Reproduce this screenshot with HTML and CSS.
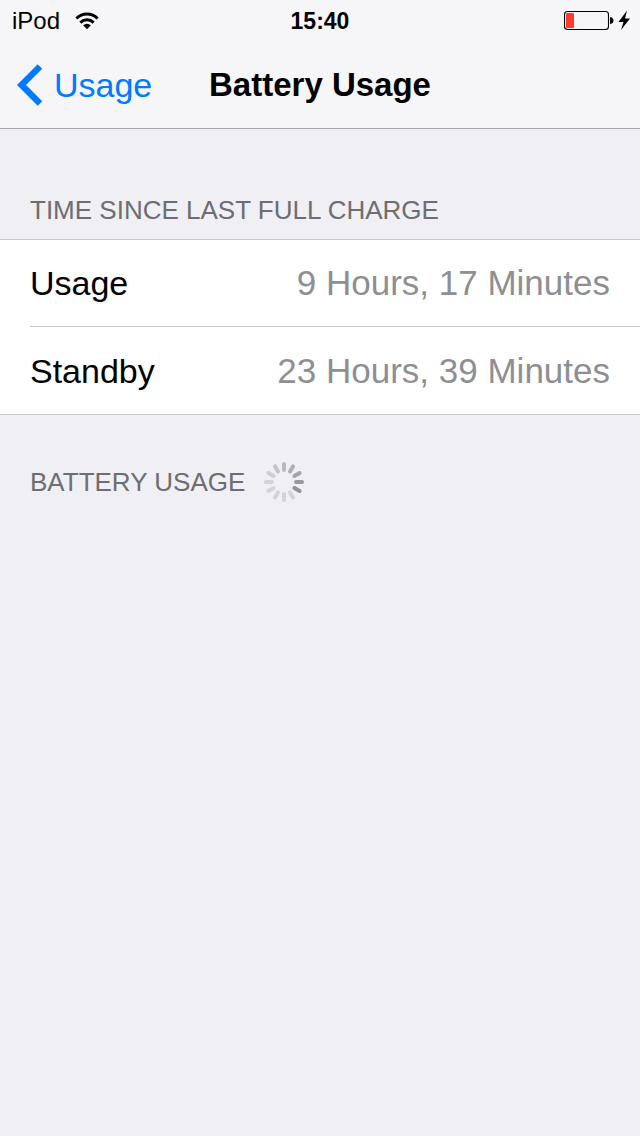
FILE: index.html
```html
<!DOCTYPE html>
<html lang="en">
<head>
<meta charset="utf-8">
<meta name="viewport" content="width=device-width, initial-scale=1">
<title>Battery Usage</title>
<link rel="stylesheet" href="styles.css">
</head>
<body>
<header class="top">
  <div class="status">
    <div class="carrier">
      <span>iPod</span>
      <svg class="wifi" width="24" height="20" viewBox="0 0 26 20" aria-hidden="true">
        <g fill="none" stroke="#000" stroke-width="3.200">
          <path d="M1.500 7.300C8 .900 18 .900 24.500 7.300"/>
          <path d="M5.800 11.700C10 7.700 16 7.700 20.200 11.700"/>
        </g>
        <path d="M8.800 14.600Q13 11.200 17.200 14.600L13 19Z"/>
      </svg>
    </div>
    <time class="clock">15:40</time>
    <div class="power">
      <svg width="68" height="22" viewBox="0 0 68 22" role="img" aria-label="Battery low, charging">
        <rect x=".500" y="1.500" width="44" height="18" rx="3" fill="none" stroke="#000" stroke-width="1.100"/>
        <rect x="2" y="3" width="8" height="15" rx="1" fill="#ff3b30"/>
        <path d="M46 7Q49.500 7.500 49.500 10.500T46 14Z"/>
        <path d="M63 .500L54.500 12H59.500L57 20L66 8.500H61Z"/>
      </svg>
    </div>
  </div>
  <nav class="bar">
    <a class="back" href="#usage">
      <svg width="26" height="42" viewBox="0 0 26 42" aria-hidden="true">
        <path d="M24 2.500L5.500 21L24 39.500" fill="none" stroke="#007aff" stroke-width="6.400"/>
      </svg>
      <span>Usage</span>
    </a>
    <h1 class="title">Battery Usage</h1>
  </nav>
</header>
<main>
  <section>
    <h2 class="caption">TIME SINCE LAST FULL CHARGE</h2>
    <dl class="list">
      <div class="row"><dt>Usage</dt><dd>9 Hours, 17 Minutes</dd></div>
      <div class="row"><dt>Standby</dt><dd>23 Hours, 39 Minutes</dd></div>
    </dl>
  </section>
  <section class="loading">
    <h2 class="caption-text">BATTERY USAGE</h2>
    <svg width="40" height="40" viewBox="-20 -20 40 40" role="img" aria-label="Loading">
      <g stroke-width="4" stroke-linecap="round">
        <path d="M0-18V-12" stroke="#b9b9be"/>
        <path d="M0-18V-12" stroke="#afafb4" transform="rotate(30)"/>
        <path d="M0-18V-12" stroke="#a4a4a9" transform="rotate(60)"/>
        <path d="M0-18V-12" stroke="#98989e" transform="rotate(90)"/>
        <path d="M0-18V-12" stroke="#929297" transform="rotate(120)"/>
        <path d="M0-18V-12" stroke="#d3d3d8" transform="rotate(150)"/>
        <path d="M0-18V-12" stroke="#d3d3d8" transform="rotate(180)"/>
        <path d="M0-18V-12" stroke="#d3d3d8" transform="rotate(210)"/>
        <path d="M0-18V-12" stroke="#d3d3d8" transform="rotate(240)"/>
        <path d="M0-18V-12" stroke="#d3d3d8" transform="rotate(270)"/>
        <path d="M0-18V-12" stroke="#cdcdd2" transform="rotate(300)"/>
        <path d="M0-18V-12" stroke="#c3c3c8" transform="rotate(330)"/>
      </g>
    </svg>
  </section>
</main>
</body>
</html>
```
FILE: styles.css
```css
* {
  box-sizing: border-box;
}

body {
  margin: 0;
  min-height: 100vh;
  background: #efeff4;
  color: #000;
  font-family: "Liberation Sans", Arial, sans-serif;
  font-size: 34px;
  line-height: 40px;
}

svg {
  display: block;
  flex: none;
}

h1, h2, dl, dd {
  margin: 0;
}

.top {
  background: #f6f6f8;
  border-bottom: 1px solid #a7a7aa;
}

.status {
  display: grid;
  grid-template-columns: 1fr auto 1fr;
  align-items: center;
  height: 42px;
  padding: 0 8px;
  font-size: 24px;
}

.carrier {
  display: flex;
  align-items: center;
  gap: 15px;
  padding-left: 4px;
}

.clock {
  font-size: 23px;
  font-weight: bold;
}

.power {
  justify-self: end;
}

.bar {
  display: grid;
  grid-template-columns: 1fr auto 1fr;
  align-items: center;
  height: 86px;
  padding: 0 16px;
}

.back {
  display: flex;
  align-items: center;
  gap: 12px;
  color: #007aff;
  text-decoration: none;
}

.title {
  font-size: 33px;
  font-weight: bold;
}

.caption {
  padding: 61px 30px 9px;
}

.caption,
.caption-text {
  color: #6d6d72;
  font-size: 26px;
  font-weight: normal;
}

.list {
  background: #fff;
  border-top: 1px solid #c8c7cc;
  border-bottom: 1px solid #c8c7cc;
}

.row {
  display: flex;
  align-items: center;
  justify-content: space-between;
  height: 86px;
  margin-left: 30px;
  padding-right: 30px;
}

.row + .row {
  height: 88px;
  border-top: 1px solid #c8c7cc;
}

.row dd {
  color: #8e8e93;
  font-size: 35px;
}

.loading {
  display: flex;
  align-items: center;
  gap: 19px;
  padding: 47px 30px;
}
```
